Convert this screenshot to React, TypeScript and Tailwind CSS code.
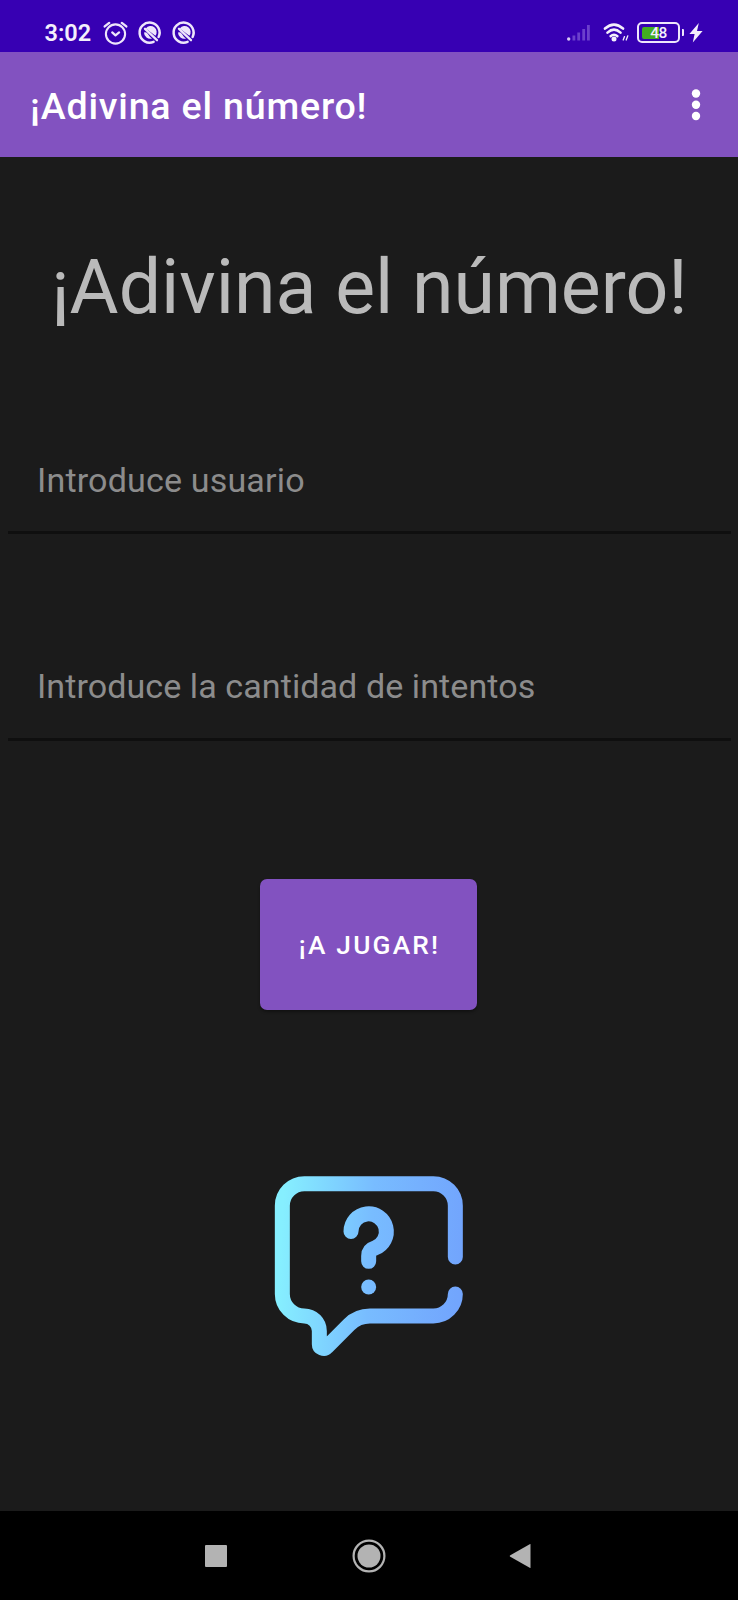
import React from "react";

function AlarmIcon() {
  return (
    <svg className="h-[26px] w-[26px]" viewBox="0 0 26 26" fill="none" stroke="#eee6fb" strokeLinecap="round">
      <circle cx="12.5" cy="14" r="9.6" strokeWidth="2.1" />
      <path d="M1.700 6.400 6.200 2.900M23.300 6.400 18.800 2.900" strokeWidth="2.400" />
      <path d="m9.200 12.400 3.300 3 3.600-3" strokeWidth="2.200" strokeLinejoin="round" />
    </svg>
  );
}

function ScreenOffIcon() {
  return (
    <svg className="h-[26px] w-[26px]" viewBox="0 0 26 26" fill="none">
      <path d="M16.6 21.8A10 10 0 1 1 21.6 17" stroke="#eee6fb" strokeWidth="2.5" strokeLinecap="round" />
      <path d="M8.8 8.400A6 6 0 0 1 18.400 15.800Z" fill="#eee6fb" />
      <path d="M7 12.400Q9.600 11.400 11.300 14.600T15 18.400A6.200 6.200 0 0 1 7 12.400Z" fill="#eee6fb" />
      <path d="m8 8.800 12 11.400" stroke="#eee6fb" strokeWidth="2.300" strokeLinecap="round" />
    </svg>
  );
}

function StatusBar() {
  return (
    <header className="flex h-[52px] items-center bg-[#3700b3] pt-[13px] pl-[44.5px] text-[#f4effc]">
      <span className="w-[58px] text-[23.5px] leading-[26px] font-semibold">3:02</span>
      <div className="flex gap-[8px]">
        <AlarmIcon />
        <ScreenOffIcon />
        <ScreenOffIcon />
      </div>
      <svg className="ml-auto h-[26px] w-[24px]" viewBox="0 0 24 26">
        <circle cx="2.7" cy="19" r="1.7" fill="#d9c9f5" />
        <path d="M6.500 15.500h2.800v5H6.500zM11.300 12.500h2.800v8h-2.800zM16.300 9h2.800v11.500h-2.800zM21 5h2.800v15.500H21z" fill="#6c40cc" />
      </svg>
      <svg className="ml-[12px] h-[26px] w-[28px]" viewBox="0 0 28 26" fill="none" stroke="#f4effc">
        <path d="M3 8.600Q12 .8 21 8.600M5.500 12.600Q12 6.800 18.500 12.600" strokeWidth="2.600" strokeLinecap="round" />
        <path d="M8.600 16.200Q12 13.200 15.400 16.200" strokeWidth="2.500" strokeLinecap="round" />
        <circle cx="12" cy="19" r="2.500" fill="#f4effc" stroke="none" />
        <path d="m21.200 20 1.300-3.400M24.200 20l1.600-4.200" strokeWidth="1.300" strokeLinecap="round" />
      </svg>
      <div className="ml-[7px] flex items-center">
        <div className="grid h-[21px] w-[43px] rounded-[5px] border-[2.5px] border-[#eee6fb] p-[2.5px]">
          <span className="col-start-1 row-start-1 w-[17px] rounded-l-[2px] bg-[#42ad22]" />
          <span className="z-10 col-start-1 row-start-1 self-center text-center text-[15.5px] leading-[12px] font-medium tracking-[-0.6px]">48</span>
        </div>
        <span className="ml-[1.5px] h-[7px] w-[2.5px] rounded-r-[1px] bg-[#eee6fb]" />
      </div>
      <svg className="mr-[35px] ml-[5px] h-[26px] w-[14px]" viewBox="0 0 14 26">
        <path d="M9.800 3 .4 14h5.200L3.800 22.500 13.600 11H8Z" fill="#f4effc" />
      </svg>
    </header>
  );
}

function AppBar() {
  return (
    <div className="flex h-[105px] items-center justify-between bg-[#8252c0] pr-[37px] pl-[30px] text-white">
      <h1 className="pt-[3px] text-[37.6px] leading-[44px] font-medium tracking-[0.8px] whitespace-nowrap">¡Adivina el número!</h1>
      <button aria-label="Más opciones" className="-mt-[2px]">
        <svg className="h-[34px] w-[10px]" viewBox="0 0 10 34" fill="currentColor">
          <circle cx="5" cy="6.500" r="4.200" />
          <circle cx="5" cy="17.700" r="4.200" />
          <circle cx="5" cy="29" r="4.200" />
        </svg>
      </button>
    </div>
  );
}

function Field({ label, className }: { label: string; className: string }) {
  return (
    <div className={`mr-[7px] ml-[8px] flex h-[105px] flex-col border-b-[3px] border-[#0f0f0f] pl-[29px] ${className}`}>
      <label className="block text-[34.1px] leading-[40px] whitespace-nowrap text-[#8c8c8c]">{label}</label>
    </div>
  );
}

function QuestionBubble() {
  return (
    <svg className="h-[210px] w-[220px]" viewBox="0 0 660 630" fill="none">
      <defs>
        <linearGradient id="bubble" gradientUnits="userSpaceOnUse" x1="60" y1="290" x2="600" y2="320">
          <stop offset="0" stopColor="#86efff" />
          <stop offset="0.5" stopColor="#78bcff" />
          <stop offset="1" stopColor="#72a5fd" />
        </linearGradient>
      </defs>
      <g stroke="url(#bubble)" strokeWidth="45" strokeLinecap="round" strokeLinejoin="round">
        <path d="M586 291V137A66 66 0 0 0 520 71H133A66 66 0 0 0 67 137V402A66 66 0 0 0 133 468A45 45 0 0 1 178 513V552A13 13 0 0 0 200.500 561L267 494A89 89 0 0 1 330 468H520A66 66 0 0 0 586 402" />
        <path d="M273 214.500A53 53 0 1 1 345 264Q326 270 326 288V304" />
      </g>
      <circle cx="326" cy="381" r="22.500" fill="url(#bubble)" />
    </svg>
  );
}

function NavigationBar() {
  return (
    <nav className="flex h-[89px] items-center bg-black pl-[205px] text-[#b3b3b3]">
      <span className="h-[22px] w-[22px] rounded-[1px] bg-current" />
      <svg className="ml-[125px] h-[34px] w-[34px]" viewBox="0 0 34 34">
        <circle cx="17" cy="17" r="15.400" fill="none" stroke="currentColor" strokeWidth="2.200" />
        <circle cx="17" cy="17" r="11.500" fill="currentColor" />
      </svg>
      <svg className="ml-[122.500px] h-[26px] w-[22px]" viewBox="0 0 22 26">
        <path d="M1.300 12.200 20.700 1.200Q21.500.8 21.500 1.600V24.400Q21.500 25.200 20.700 24.800L1.300 13.800Q0 13 1.300 12.200Z" fill="currentColor" />
      </svg>
    </nav>
  );
}

export default function App() {
  return (
    <div className="flex h-[1600px] w-[738px] flex-col bg-[#1b1b1b] font-[Roboto,sans-serif]">
      <StatusBar />
      <AppBar />
      <main className="flex flex-1 flex-col">
        <h2 className="mt-[86px] pl-px text-center text-[75.2px] leading-[88px] whitespace-nowrap text-[#bababa]">¡Adivina el número!</h2>
        <div className="mt-[98px] flex flex-col gap-[102px]">
          <Field label="Introduce usuario" className="pt-[31px] tracking-[0.15px]" />
          <Field label="Introduce la cantidad de intentos" className="pt-[30px] tracking-[0.06px]" />
        </div>
        <button className="mt-[138px] ml-[260px] h-[131px] w-[217px] rounded-[7px] bg-[#8252c0] pt-[2px] pl-[2px] text-[26.3px] font-medium tracking-[2.2px] text-white shadow-[0_2px_3px_rgba(0,0,0,0.35)]">
          ¡A JUGAR!
        </button>
        <div className="mt-[150px] ml-[260px]">
          <QuestionBubble />
        </div>
      </main>
      <NavigationBar />
    </div>
  );
}
